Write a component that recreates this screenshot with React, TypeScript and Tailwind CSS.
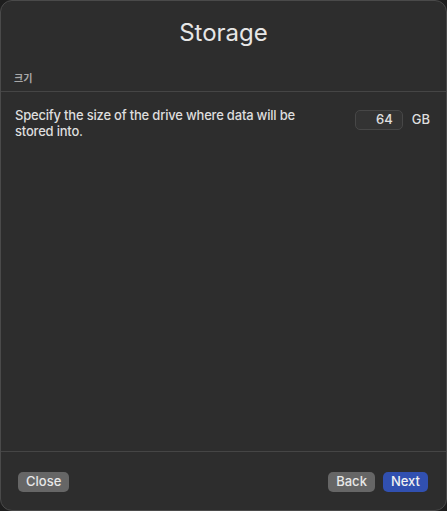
export default function App() {
  return (
    <div className="w-[447px] h-[511px] bg-[#1e1e1e]" style={{ fontFamily: "Inter, 'Noto Sans CJK KR', sans-serif" }}>
      <div className="w-full h-full flex flex-col bg-[#2d2d2d] rounded-[12px] border border-[#4a4a4a] overflow-hidden">
        {/* Header */}
        <div className="h-[47px] flex items-end justify-center">
          <h1 className="text-[24px] leading-[30px] text-[#e6e6e6] font-normal">Storage</h1>
        </div>
        <div className="h-[43px] flex items-end px-[13px] pb-[7px]">
          <span className="text-[10px] leading-[12px] text-[#a8a8a8] font-semibold">크기</span>
        </div>
        <div className="h-px bg-[#454545]" />

        {/* Content */}
        <div className="flex-1 flex items-start justify-between pl-[14px] pr-[16px] pt-[15px]">
          <p className="w-[300px] text-[13px] leading-[16px] tracking-[-0.2px] text-[#dedede] font-medium">
            Specify the size of the drive where data will be stored into.
          </p>
          <div className="flex items-center gap-[9px] pt-[3px]">
            <div className="w-[48px] h-[20px] rounded-[5px] border border-[#474747] bg-[#333333] flex items-center justify-end pr-[9px]">
              <span className="text-[13px] text-[#e0e0e0] font-medium">64</span>
            </div>
            <span className="text-[13px] text-[#dedede] font-medium">GB</span>
          </div>
        </div>

        <div className="h-px bg-[#454545]" />
        {/* Footer */}
        <div className="h-[58px] flex items-start justify-between pl-[17px] pr-[18px] pt-[20px]">
          <button className="h-[20px] px-[8px] rounded-[5px] bg-[#666666] text-[13px] text-[#e8e8e8] font-medium">Close</button>
          <div className="flex gap-[8px]">
            <button className="h-[20px] px-[8px] rounded-[5px] bg-[#666666] text-[13px] text-[#e8e8e8] font-medium">Back</button>
            <button className="h-[20px] px-[8px] rounded-[5px] bg-[#3150b0] text-[13px] text-[#f0f0f0] font-medium">Next</button>
          </div>
        </div>
      </div>
    </div>
  );
}
